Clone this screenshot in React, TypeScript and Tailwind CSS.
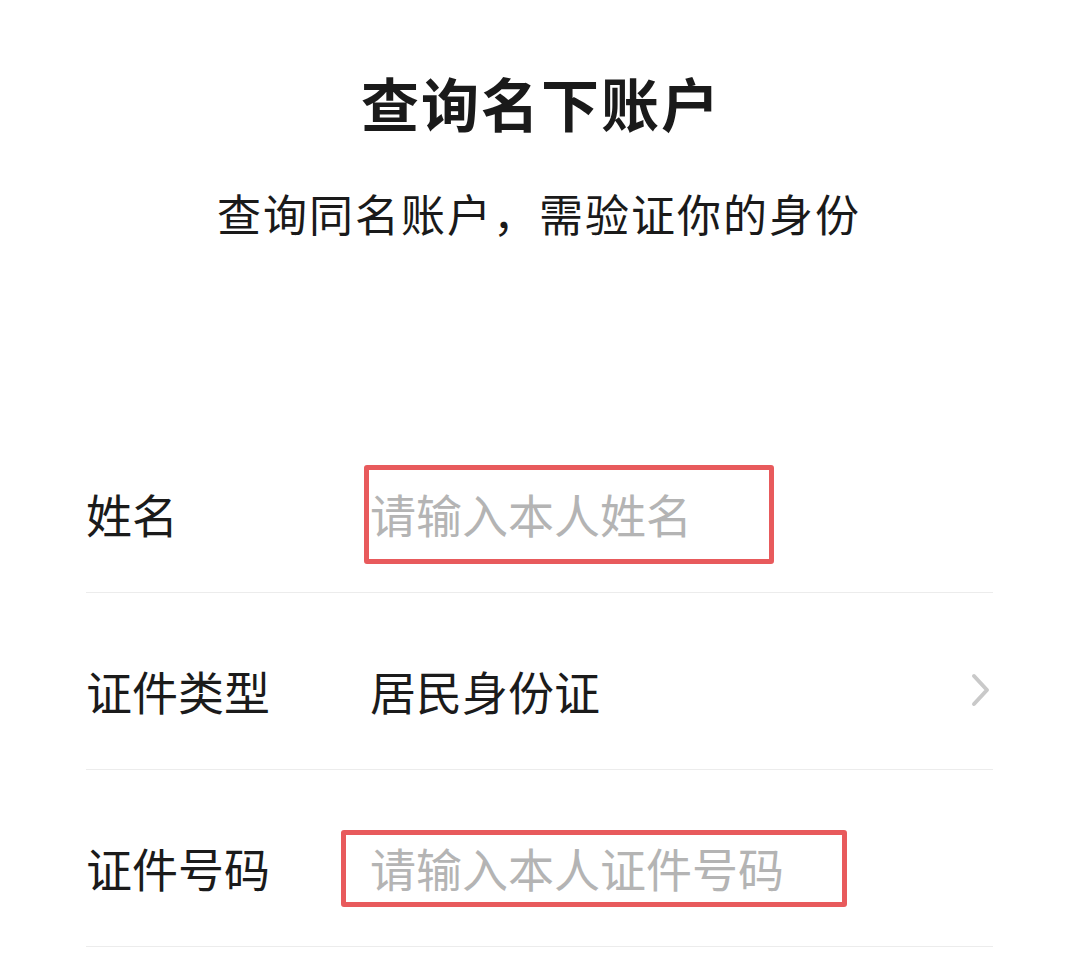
import React from "react";

const font = { fontFamily: '"Noto Sans CJK SC", "Noto Sans", sans-serif' };

function Row({
  label,
  children,
  box,
  chevron,
}: {
  label: string;
  children: React.ReactNode;
  box?: string;
  chevron?: boolean;
}) {
  return (
    <div className="relative flex h-[177px] items-center border-b border-[#ececec] pt-[17px]">
      <div className="w-[284px] shrink-0 text-[46px] leading-[46px] text-[#1b1b1b]">{label}</div>
      <div className="flex-1 text-[46px] leading-[46px]">{children}</div>
      {chevron && (
        <svg className="mr-[2px] h-[34px] w-[20px]" viewBox="0 0 20 34" fill="none">
          <path d="M3 3 L16 17 L3 31" stroke="#c9c9c9" strokeWidth="4" strokeLinecap="round" strokeLinejoin="round" />
        </svg>
      )}
      {box && <div className={`pointer-events-none absolute rounded-[3px] border-[5px] border-[#e85a5c] ${box}`} />}
    </div>
  );
}

export default function App() {
  return (
    <div className="min-h-[957px] w-[1066px] overflow-hidden bg-white" style={font}>
      <div className="flex flex-col items-center pt-[72px]">
        <h1 className="ml-[16px] text-[58px] font-bold leading-[60px] tracking-[2px] text-[#1a1a1a]">查询名下账户</h1>
        <p className="ml-[12px] mt-[56px] text-[44px] leading-[50px] tracking-[2px] text-[#1a1a1a]">查询同名账户，需验证你的身份</p>
      </div>
      <div className="ml-[86px] mr-[73px] mt-[178px]">
        <Row label="姓名" box="left-[278px] top-[49px] h-[99px] w-[410px]">
          <span className="text-[#b4b4b4]">请输入本人姓名</span>
        </Row>
        <Row label="证件类型" chevron>
          <span className="text-[#1b1b1b]">居民身份证</span>
        </Row>
        <Row label="证件号码" box="left-[255px] top-[60px] h-[77px] w-[506px]">
          <span className="text-[#b4b4b4]">请输入本人证件号码</span>
        </Row>
      </div>
    </div>
  );
}
